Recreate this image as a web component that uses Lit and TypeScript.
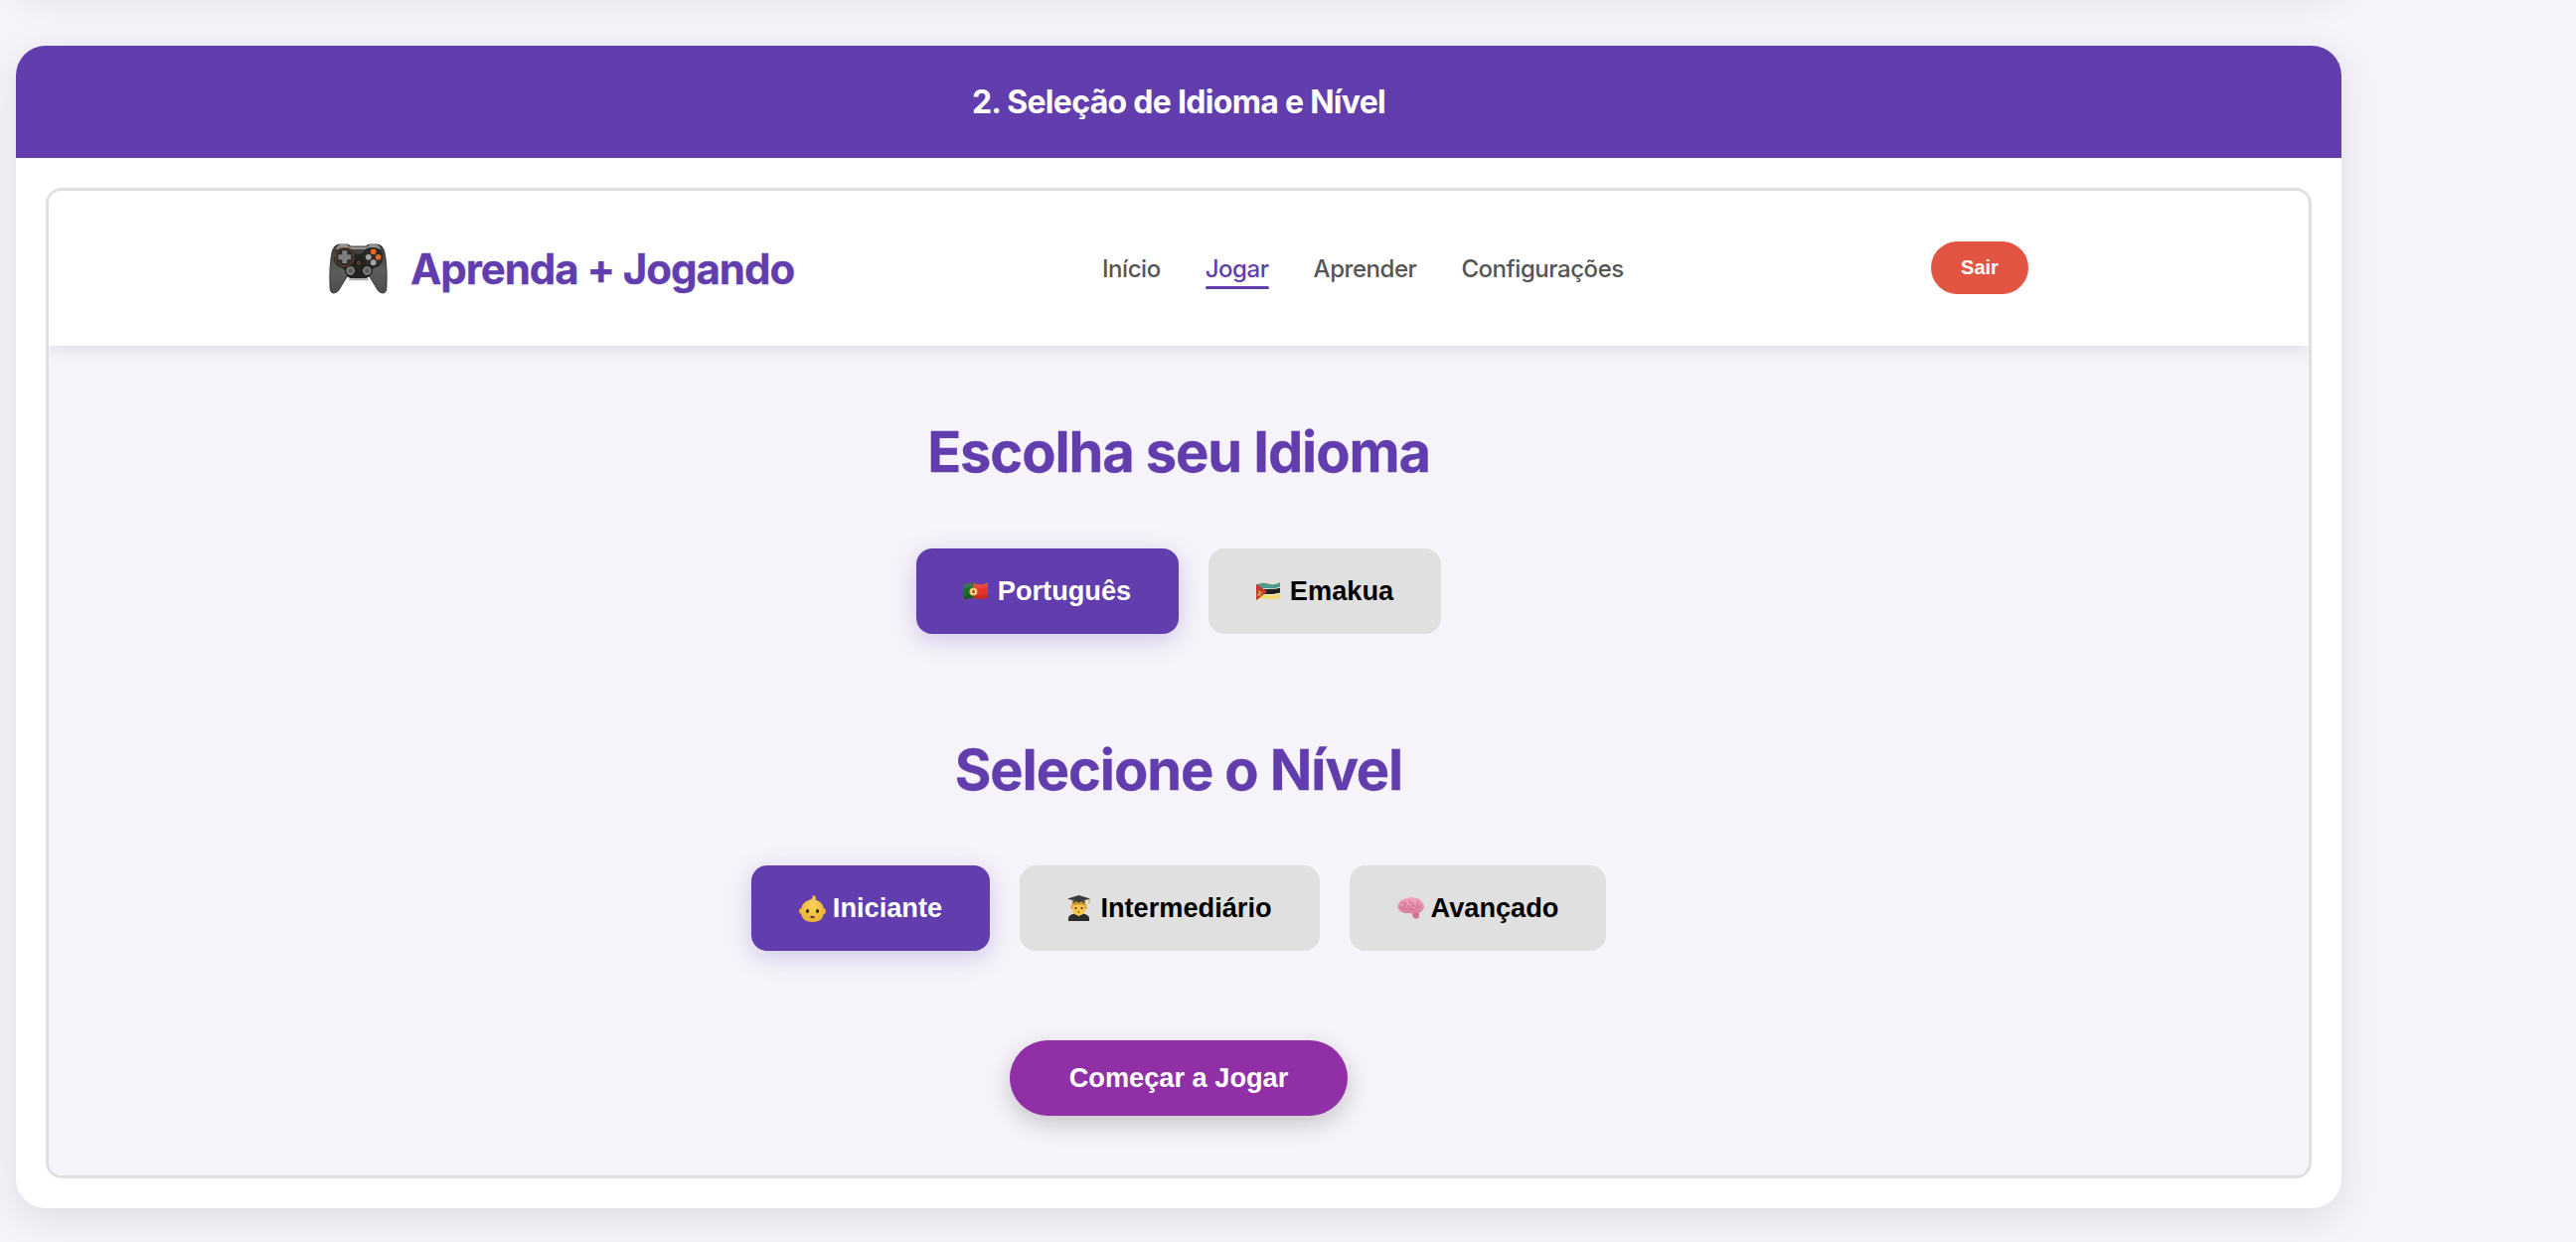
import { LitElement, html, css, svg } from "lit";
import { customElement } from "lit/decorators.js";

const gamepad = svg`<svg class="logo-ico" viewBox="0 0 60 52">
  <defs><linearGradient id="gp" x1="0" y1="0" x2="0" y2="1"><stop offset="0" stop-color="#3a3b39"/><stop offset=".55" stop-color="#5e5f5c"/><stop offset="1" stop-color="#4c4d4a"/></linearGradient></defs>
  <path d="M11 1 h7 q3 0 4 2 h16 q1-2 4-2 h7 q6 0 8 8 q3 14 2 36 q0 6-4 6 q-3 0-5-3 l-8-13 q-2-3-5-3 h-14 q-3 0-5 3 l-8 13 q-2 3-5 3 q-4 0-4-6 q-1-22 2-36 q2-8 8-8z" fill="url(#gp)" stroke="#2a2a29" stroke-width=".8"/>
  <path d="M12 1 h6 l3 2.5 h18 l3-2.5 h6 q4 1 5 5 H7 q1-4 5-5z" fill="#93948f"/>
  <path d="M6 14 q0-10 10-10 q7 0 9 5 q1 2 5 2 q4 0 5-2 q2-5 10-5 q10 0 10 10 q0 9-8 11 q-3 1-4 5 q-2 6-7 6 h-12 q-5 0-7-6 q-1-4-4-5 q-8-2-8-11z" fill="#222321"/>
  <circle cx="16" cy="14" r="9.5" fill="#2c2c2b" stroke="#8e4a25" stroke-width=".9"/>
  <path d="M13.5 7.5h5v4h4v5h-4v4h-5v-4h-4v-5h4z" fill="#7f807e"/>
  <circle cx="45" cy="14" r="9.5" fill="#2c2c2b"/>
  <circle cx="45.5" cy="8.5" r="2.9" fill="#e8671f"/><circle cx="50.5" cy="14" r="2.9" fill="#e8671f"/>
  <circle cx="40.5" cy="14" r="2.9" fill="#a5a6a4"/><circle cx="45.5" cy="19.5" r="2.9" fill="#a5a6a4"/>
  <circle cx="30.5" cy="20" r="1.5" fill="none" stroke="#a8502a" stroke-width=".9"/>
  <circle cx="22" cy="28" r="5" fill="#8b8c8a" stroke="#232422" stroke-width="1.4"/><circle cx="22" cy="28" r="2.7" fill="#5c5d5a"/>
  <circle cx="39" cy="28" r="5" fill="#8b8c8a" stroke="#232422" stroke-width="1.4"/><circle cx="39" cy="28" r="2.7" fill="#5c5d5a"/>
  <path d="M21 36 h19 l1 2 h-21z" fill="#a9aaa7"/>
</svg>`;

const flagPt = svg`<svg class="ico flag" viewBox="0 0 24 20">
  <clipPath id="fp"><path d="M0 3.5 Q6 .5 12 2.5 T24 1 V16.5 Q18 19 12 17.5 T0 19z"/></clipPath>
  <g clip-path="url(#fp)"><rect width="24" height="20" fill="#e5352c"/><rect width="9.5" height="20" fill="#1d6a33"/>
  <path d="M0 3.5 Q6 .5 12 2.5 T24 1 V6 Q18 8 12 6.5 T0 8z" fill="#fff" opacity=".1"/><path d="M0 15 Q6 13 12 14 T24 12.5 V20 H0z" fill="#000" opacity=".14"/></g>
  <circle cx="9.5" cy="10.5" r="4" fill="#efc63f"/><circle cx="9.5" cy="10.5" r="2.6" fill="#fff"/><rect x="8.2" y="8.7" width="2.6" height="3.6" rx=".9" fill="#c8372d"/>
</svg>`;

const flagMz = svg`<svg class="ico flag" viewBox="0 0 24 20">
  <clipPath id="fm"><path d="M0 3.5 Q6 .5 12 2.5 T24 1 V16.5 Q18 19 12 17.5 T0 19z"/></clipPath>
  <g clip-path="url(#fm)"><rect width="24" height="20" fill="#f5dc62"/>
  <path d="M0 0H24V6.5Q18 8.5 12 7.5T0 9z" fill="#4f9a8e"/>
  <path d="M0 8.2Q6 6.5 12 7.2T24 5.8V7Q18 8.9 12 8T0 9.5z" fill="#f2f2f0"/>
  <path d="M0 9Q6 7.5 12 8T24 6.8V11.8Q18 13.8 12 13T0 14z" fill="#1e1e1e"/>
  <path d="M0 14Q6 12.5 12 13T24 11.6V12.8Q18 14.8 12 14T0 15.2z" fill="#f2f2f0"/>
  <path d="M0 2.5 L11 10.5 L0 19.5z" fill="#c8342e"/></g>
  <path d="M3 8.5l1 2.5 2.5.2-2 1.5.8 2.5-2.3-1.4-2 1.4z" fill="#efd24a"/><path d="M2 11.5l3 1.8" stroke="#222" stroke-width=".7"/>
</svg>`;

const baby = svg`<svg class="ico baby" viewBox="0 0 27 27">
  <defs><radialGradient id="bb" cx=".5" cy=".4" r=".65"><stop offset="0" stop-color="#fbd55a"/><stop offset="1" stop-color="#eab03a"/></radialGradient></defs>
  <ellipse cx="2.8" cy="16" rx="2.8" ry="3" fill="#eab03a"/><ellipse cx="24.2" cy="16" rx="2.8" ry="3" fill="#eab03a"/>
  <path d="M14 0 q3 .5 3 3 q-.2 1-.5 1.5 Q25 7 25 16 q0 11-11.500 11 T2 16 Q2 7 11 4.5 Q13 4 13.5 2.5 q0-1.5.5-2.5z" fill="url(#bb)"/>
  <ellipse cx="8.5" cy="16" rx="1.6" ry="1.9" fill="#3a2812"/><ellipse cx="18.5" cy="16" rx="1.6" ry="1.9" fill="#3a2812"/>
  <ellipse cx="13.5" cy="22" rx="2.3" ry="1.3" fill="#6a3d1a"/>
</svg>`;

const student = svg`<svg class="ico student" viewBox="0 0 23 26">
  <path d="M1 26 V22.5 Q2 19.5 7 18.5 H16 Q21 19.5 22 22.5 V26z" fill="#2c2c2e"/>
  <path d="M8.5 18 l3 3.5 3-3.5z" fill="#f3bd42"/>
  <path d="M4.5 7 h14 v6 q0 6.5-7 7.5 q-7-1-7-7.5z" fill="#f6c54a"/>
  <rect x="3.4" y="10" width="2" height="4" rx="1" fill="#dfa436"/><rect x="17.6" y="10" width="2" height="4" rx="1" fill="#dfa436"/>
  <path d="M4.5 10.5 q0-3 2-4 h10 q2 1 2 4 q-7-2.5-14 0z" fill="#c9902c"/>
  <circle cx="8.5" cy="13" r="1" fill="#3a2812"/><circle cx="14.5" cy="13" r="1" fill="#3a2812"/>
  <ellipse cx="11.5" cy="17" rx="1.3" ry=".8" fill="#a0651f"/>
  <path d="M0 3.5 L11.5 0 L23 3.5 L11.5 7z" fill="#3a3a3c"/><path d="M5.5 5.5 v2 q6-2 12 0 v-2 L11.5 7.3z" fill="#1f1f20"/>
  <path d="M22 4v4.5" stroke="#d2a13a" stroke-width="1"/>
</svg>`;

const brain = svg`<svg class="ico brain" viewBox="0 0 27 22">
  <defs><linearGradient id="br" x1="0" y1="0" x2="0" y2="1"><stop offset="0" stop-color="#f0a6bd"/><stop offset="1" stop-color="#dc7e9c"/></linearGradient></defs>
  <path d="M17 14 q5 0 5 4 q0 3.5-3 3.5 q-3.5 0-4-4z" fill="#d0708f"/>
  <path d="M11 .8 q4-1.5 7 0 q4 0 6 3 q3 2.5 3 6 q0 3-2.5 4.5 q-3 2.5-7 1.5 q-3 1.5-6 0 q-3 1-6-.5 q-3-.5-4.5-3.5 q-1.5-3 .5-5.5 q1-3.5 4.5-4 q2-1.8 4.5-1.5z" fill="url(#br)"/>
  <g fill="none" stroke="#bf5f7e" stroke-width=".9" opacity=".85">
  <path d="M5 5 q3-.5 4 2 q-2.5 1-2.5 3.5"/><path d="M11 2.5 q1 3 4 3 q-.5 3 2.5 3.5"/><path d="M2 10 q3-.5 4.5 2 q3-1 4.5 1"/>
  <path d="M21 3.5 q-2 2 0 4 q-2.5 1-1.5 4"/><path d="M11 8 q2 1.5 1.5 4 q3-.5 5 1.5"/><path d="M24 8.5 q-2 .5-2.5 3"/></g>
</svg>`;

@customElement("app-root")
export class AppRoot extends LitElement {
  static styles = css`
    :host { display: block; height: 1250px; overflow: hidden; background: #f6f4fa; padding-left: 16px; font-family: Inter, "Liberation Sans", sans-serif; }
    .prev { width: 2340px; height: 100px; margin: -114px 0 60px; background: #fff; border-radius: 30px; box-shadow: 0 10px 40px rgba(0,0,0,.1); }
    .card { width: 2340px; height: 1170px; background: #fff; border-radius: 30px; box-shadow: 0 10px 40px rgba(0,0,0,.1); display: flex; flex-direction: column; overflow: hidden; }
    .card-head { height: 113px; flex: none; background: #613dae; color: #fff; display: flex; align-items: center; justify-content: center; font-size: 32px; font-weight: 700; letter-spacing: -.7px; }
    .card-body { flex: 1; padding: 30px; min-height: 0; display: flex; }
    .frame { flex: 1; border: 3px solid #e0e0e0; border-radius: 16px; background: #f6f4fa; overflow: hidden; display: flex; flex-direction: column; }
    nav { height: 156px; flex: none; background: #fff; box-shadow: 0 3px 16px rgba(0,0,0,.1); position: relative; display: flex; align-items: center; padding-left: 282px; }
    .logo { display: flex; align-items: center; gap: 23px; width: 778px; color: #613dae; font-size: 42px; font-weight: 700; letter-spacing: -1.05px; -webkit-text-stroke: .3px #613dae; }
    .logo-ico { width: 59px; height: 51px; flex: none; }
    .links { display: flex; gap: 45px; width: 834px; font-size: 24px; font-weight: 500; color: #555; letter-spacing: -.45px; }
    .links span { position: relative; }
    .links .on { color: #613dae; }
    .links .on::after { content: ""; position: absolute; left: 0; right: 0; bottom: -6px; height: 3px; background: #613dae; border-radius: 2px; }
    .sair { width: 98px; height: 53px; margin-bottom: 1px; border-radius: 27px; background: #e25543; color: #fff; font: 700 20px "Liberation Sans", sans-serif; display: flex; align-items: center; justify-content: center; }
    main { flex: 1; display: flex; flex-direction: column; align-items: center; }
    h2 { margin: 0; color: #613dae; font-size: 56px; font-weight: 700; line-height: 68px; letter-spacing: -1.1px; -webkit-text-stroke: .3px #613dae; }
    h2.first { margin-top: 73px; }
    h2.second { margin-top: 103px; }
    .row { display: flex; gap: 30px; margin-top: 63px; }
    .row.lower { margin-top: 62px; }
    .btn { height: 86px; box-sizing: border-box; border-radius: 16px; background: #e0e0e0; color: #000; font: 700 27.2px "Liberation Sans", sans-serif; display: flex; align-items: center; justify-content: center; }
    .btn.on { background: #613dae; color: #fff; box-shadow: 0 6px 24px rgba(97,61,174,.25); }
    .ico { flex: none; }
    .flag { width: 24px; height: 20px; margin-right: 10px; }
    .baby { width: 27px; height: 27px; margin-right: 7px; }
    .student { width: 23px; height: 26px; margin-right: 10px; }
    .brain { width: 27px; height: 22px; margin-right: 7px; }
    .cta { margin-top: 90px; width: 340px; height: 76px; border-radius: 38px; background: #912fa6; color: #fff; font: 700 27.2px "Liberation Sans", sans-serif; display: flex; align-items: center; justify-content: center; box-shadow: 0 8px 24px rgba(0,0,0,.2); }
    .w1 { width: 264px; } .w2 { width: 234px; } .w3 { width: 240px; } .w4 { width: 302px; } .w5 { width: 258px; }
  `;

  render() {
    return html`<div class="prev"></div><div class="card">
      <div class="card-head">2. Seleção de Idioma e Nível</div>
      <div class="card-body"><div class="frame">
        <nav>
          <div class="logo">${gamepad}<span>Aprenda + Jogando</span></div>
          <div class="links"><span>Início</span><span class="on">Jogar</span><span>Aprender</span><span>Configurações</span></div>
          <div class="sair">Sair</div>
        </nav>
        <main>
          <h2 class="first">Escolha seu Idioma</h2>
          <div class="row">
            <div class="btn on w1">${flagPt}Português</div>
            <div class="btn w2">${flagMz}Emakua</div>
          </div>
          <h2 class="second">Selecione o Nível</h2>
          <div class="row lower">
            <div class="btn on w3">${baby}Iniciante</div>
            <div class="btn w4">${student}Intermediário</div>
            <div class="btn w5">${brain}Avançado</div>
          </div>
          <div class="cta">Começar a Jogar</div>
        </main>
      </div></div>
    </div>`;
  }
}
